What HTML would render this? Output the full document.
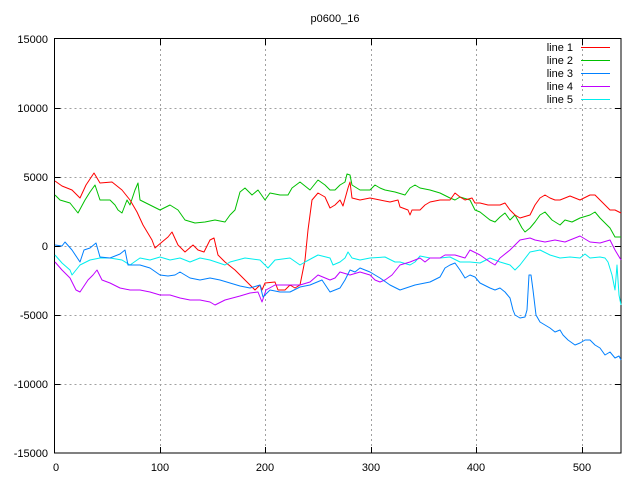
<!DOCTYPE html>
<html><head><style>
html,body{margin:0;padding:0;background:#fff;}
svg{display:block;font-family:"Liberation Sans",sans-serif;font-size:11px;}
</style></head><body>
<svg width="640" height="480" viewBox="0 0 640 480">
<rect width="640" height="480" fill="#fff"/>
<g stroke="#a0a0a0" stroke-width="1" stroke-dasharray="2,3" fill="none">
<path d="M54.5 108.5H621M54.5 177.5H621M54.5 246.5H621M54.5 315.5H621M54.5 384.5H621"/>
<path d="M160.5 39V453M265.5 39V453M371.5 39V453M476.5 39V453M582.5 39V453"/>
</g>
<g stroke="#000" stroke-width="1" fill="none">
<rect x="54.5" y="38.5" width="566.5" height="414.5"/>
<path d="M54.5 108.5h6M54.5 177.5h6M54.5 246.5h6M54.5 315.5h6M54.5 384.5h6M621 108.5h-6M621 177.5h-6M621 246.5h-6M621 315.5h-6M621 384.5h-6"/>
<path d="M160.5 453v-6M265.5 453v-6M371.5 453v-6M476.5 453v-6M582.5 453v-6M160.5 39v6M265.5 39v6M371.5 39v6M476.5 39v6M582.5 39v6"/>
</g>
<g fill="#000" text-anchor="end">
<text x="48" y="43">15000</text><text x="48" y="112">10000</text><text x="48" y="181">5000</text>
<text x="48" y="250">0</text><text x="48" y="319">-5000</text><text x="48" y="388">-10000</text><text x="48" y="457">-15000</text>
</g>
<g fill="#000" text-anchor="middle">
<text x="56" y="471">0</text><text x="160" y="471">100</text><text x="265" y="471">200</text><text x="371" y="471">300</text><text x="476" y="471">400</text><text x="582" y="471">500</text>
<text x="335" y="22">p0600_16</text>
</g>
<g fill="#000" text-anchor="end">
<text x="573" y="51">line 1</text><text x="573" y="64">line 2</text><text x="573" y="77">line 3</text><text x="573" y="90">line 4</text><text x="573" y="103">line 5</text>
</g>
<g stroke-width="1" fill="none">
<path d="M581 47.5h29" stroke="#ff0000"/><path d="M581 60.5h29" stroke="#00c000"/><path d="M581 73.5h29" stroke="#0080ff"/><path d="M581 86.5h29" stroke="#c000ff"/><path d="M581 99.5h29" stroke="#00eeee"/>
</g>
<g fill="none" stroke-width="1" stroke-linejoin="round">
<polyline stroke="#00c000" points="55,195 60,200 70,203 78,213 85,200 90,192 95,185 100,200 110,200 115,205 118,210 122,213 127,200 130,205 135,190 138,183 140,200 150,205 160,210 170,205 178,210 185,220 195,223 205,222 215,220 225,222 230,215 235,210 240,192 245,188 252,195 258,190 265,200 270,193 280,195 288,195 292,188 300,182 310,190 318,180 325,185 330,190 335,190 340,185 345,182 347,174 350,175 352,185 360,190 370,190 375,185 380,188 385,190 395,192 405,195 410,188 415,185 420,188 430,190 440,193 450,198 455,200 460,197 470,200 475,210 480,212 490,220 495,222 500,217 505,213 510,220 515,215 522,228 525,232 530,228 535,222 540,215 545,212 552,220 560,225 565,220 572,222 580,218 590,215 595,212 600,218 605,223 610,228 615,237 621,237"/>
<polyline stroke="#ff0000" points="55,181 62,186 72,190 80,198 86,185 94,173 100,183 112,182 122,190 130,200 137,212 143,225 152,240 155,248 162,242 168,237 172,232 178,245 185,252 193,245 198,250 204,252 210,240 214,238 218,255 225,262 235,270 245,280 255,290 260,285 262,290 265,283 275,282 278,290 285,290 290,285 295,288 300,285 305,260 308,230 312,200 318,193 325,197 330,208 335,205 340,200 343,206 348,188 350,182 352,198 360,200 370,198 380,200 390,202 398,200 400,207 408,210 410,215 412,210 420,210 425,205 430,202 440,200 450,200 455,193 460,197 465,200 472,198 475,203 480,203 488,205 500,205 505,203 510,210 515,215 520,218 530,215 535,205 540,198 545,195 550,198 555,200 560,200 565,198 570,196 580,200 590,195 595,195 600,200 605,205 610,210 615,210 621,213"/>
<polyline stroke="#00eeee" points="55,255 62,263 70,270 72,275 80,265 90,260 100,258 110,258 122,260 130,265 140,258 150,260 160,257 170,260 180,258 190,262 200,258 210,260 225,265 230,262 245,258 260,260 268,268 275,260 290,258 300,265 305,262 318,255 330,258 333,265 340,262 345,258 348,252 352,258 360,260 370,258 385,257 395,262 400,262 410,265 415,262 420,256 430,258 440,258 450,257 460,262 470,262 480,263 490,258 500,262 510,265 515,270 520,265 530,252 540,250 550,255 560,258 570,257 580,258 585,254 590,258 600,257 605,258 608,262 612,275 615,290 617,265 619,295 621,305"/>
<polyline stroke="#c000ff" points="55,262 62,270 70,278 76,290 80,292 88,280 93,275 97,270 102,280 110,283 120,288 130,290 140,290 150,292 160,295 170,295 180,298 190,300 200,300 210,302 215,305 225,300 240,296 250,293 258,292 262,302 266,290 275,285 290,285 300,285 310,282 318,275 330,280 335,278 340,272 350,275 360,272 370,275 375,280 380,282 385,280 392,275 400,265 410,262 420,258 425,262 430,258 440,258 445,255 455,255 465,258 470,250 480,255 490,262 495,265 500,258 510,250 520,240 530,238 535,240 545,242 555,240 565,242 575,238 580,236 590,242 600,243 610,240 615,250 621,260"/>
<polyline stroke="#0080ff" points="55,245 62,246 65,242 72,250 80,262 84,250 90,248 96,243 100,257 110,258 120,254 125,250 128,265 140,265 150,268 160,275 168,276 175,275 180,272 190,278 200,280 210,278 220,280 230,283 240,286 250,288 260,285 263,297 270,290 280,292 290,292 300,287 310,285 322,280 330,292 340,288 345,280 350,270 355,272 360,268 370,272 380,278 390,285 400,290 415,285 430,282 440,277 445,268 450,265 455,263 460,270 465,278 470,275 475,277 480,283 490,288 495,290 500,288 505,292 510,298 513,310 515,315 520,318 525,317 527,310 529,275 531,275 533,290 536,315 540,322 550,328 555,332 560,330 563,335 568,340 575,345 580,343 585,340 590,340 595,345 600,348 605,355 610,352 615,358 619,356 621,360"/>
</g>
</svg>
</body></html>
